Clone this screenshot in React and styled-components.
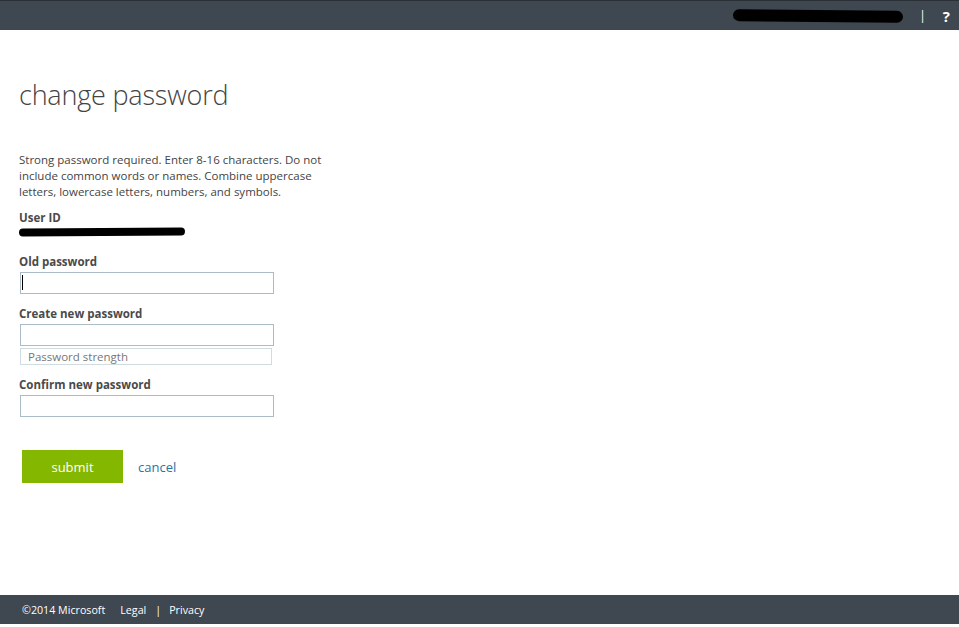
import React from 'react'
import styled, { createGlobalStyle } from 'styled-components'

const GlobalStyle = createGlobalStyle`
  html, body {
    margin: 0;
    padding: 0;
    background: #fff;
  }
  body {
    font-family: "Open Sans", "Noto Sans", "Liberation Sans", sans-serif;
    color: #444;
  }
`

const Page = styled.div`
  display: flex;
  flex-direction: column;
  height: 100vh;
`

const TopBar = styled.header`
  height: 30px;
  flex-shrink: 0;
  background: #3f4751;
  border-top: 1px solid #2c3138;
  display: flex;
  align-items: center;
  justify-content: flex-end;
  padding-right: 9px;
  box-sizing: border-box;
`

const Redacted = styled.span`
  display: inline-block;
  width: ${p => p.w}px;
  height: ${p => p.h}px;
  background: #000;
  border-radius: 6px;
  transform: rotate(${p => p.tilt || 0}deg);
`

const Divider = styled.span`
  color: #fff;
  font-size: 12px;
  margin: 0 17px 0 16px;
`

const Help = styled.span`
  color: #fff;
  font-weight: 700;
  font-size: 15px;
`

const Main = styled.main`
  flex: 1;
  padding: 46px 19px 0;
`

const Title = styled.h1`
  margin: 0 0 39px;
  font-weight: 300;
  font-size: 27px;
  letter-spacing: -0.2px;
  color: #444;
`

const Form = styled.form`
  width: 320px;
  font-size: 11.5px;
`

const Hint = styled.p`
  margin: 0 0 10px;
  line-height: 16px;
  color: #444;
`

const Field = styled.div`
  display: flex;
  flex-direction: column;
  margin-bottom: ${p => p.gap || 12}px;
`

const Label = styled.label`
  font-weight: 700;
  color: #4a4a4a;
  line-height: 16px;
  margin-bottom: 2px;
`

const InputWrap = styled.div`
  position: relative;
  width: 254px;
  margin-left: 1px;
`

const Input = styled.input`
  box-sizing: border-box;
  width: 254px;
  height: 22px;
  border: 1px solid #a9bcc8;
  outline: none;
  padding: 0 4px;
  font-family: inherit;
  background: #fff;
`

const Caret = styled.span`
  position: absolute;
  left: 2px;
  top: 3px;
  width: 1px;
  height: 15px;
  background: #000;
`

const Strength = styled.div`
  box-sizing: border-box;
  width: 252px;
  height: 17px;
  margin: 2px 0 0 1px;
  border: 1px solid #cfdde3;
  color: #777;
  padding-left: 7px;
  line-height: 15px;
  font-size: 11.5px;
`

const Actions = styled.div`
  display: flex;
  align-items: center;
  gap: 15px;
  margin: 33px 0 0 3px;
`

const Submit = styled.button`
  width: 101px;
  height: 33px;
  border: none;
  background: #84b700;
  color: #fff;
  font-family: inherit;
  font-size: 13px;
`

const Cancel = styled.a`
  color: #2c72a6;
  font-size: 13px;
  text-decoration: none;
`

const Footer = styled.footer`
  height: 29px;
  margin-bottom: 3px;
  flex-shrink: 0;
  background: #3f4751;
  display: flex;
  align-items: center;
  padding-left: 22px;
  color: #fff;
  font-size: 10.7px;
`

const FooterLink = styled.span`
  margin-left: ${p => p.m || 0}px;
`

export default function App() {
  return (
    <Page>
      <GlobalStyle />
      <TopBar>
        <Redacted w={170} h={12} tilt={0.6} />
        <Divider>|</Divider>
        <Help>?</Help>
      </TopBar>
      <Main>
        <Title>change password</Title>
        <Form onSubmit={e => e.preventDefault()}>
          <Hint>
            Strong password required. Enter 8-16 characters. Do not include common words or names.
            Combine uppercase letters, lowercase letters, numbers, and symbols.
          </Hint>
          <Field gap={18}>
            <Label>User ID</Label>
            <Redacted w={166} h={8} tilt={-0.3} />
          </Field>
          <Field gap={12}>
            <Label>Old password</Label>
            <InputWrap>
              <Input type="password" />
              <Caret />
            </InputWrap>
          </Field>
          <Field gap={12}>
            <Label>Create new password</Label>
            <InputWrap>
              <Input type="password" />
            </InputWrap>
            <Strength>Password strength</Strength>
          </Field>
          <Field gap={0}>
            <Label>Confirm new password</Label>
            <InputWrap>
              <Input type="password" />
            </InputWrap>
          </Field>
          <Actions>
            <Submit type="submit">submit</Submit>
            <Cancel href="#">cancel</Cancel>
          </Actions>
        </Form>
      </Main>
      <Footer>
        ©2014 Microsoft
        <FooterLink m={15}>Legal</FooterLink>
        <FooterLink m={9}>|</FooterLink>
        <FooterLink m={8}>Privacy</FooterLink>
      </Footer>
    </Page>
  )
}
